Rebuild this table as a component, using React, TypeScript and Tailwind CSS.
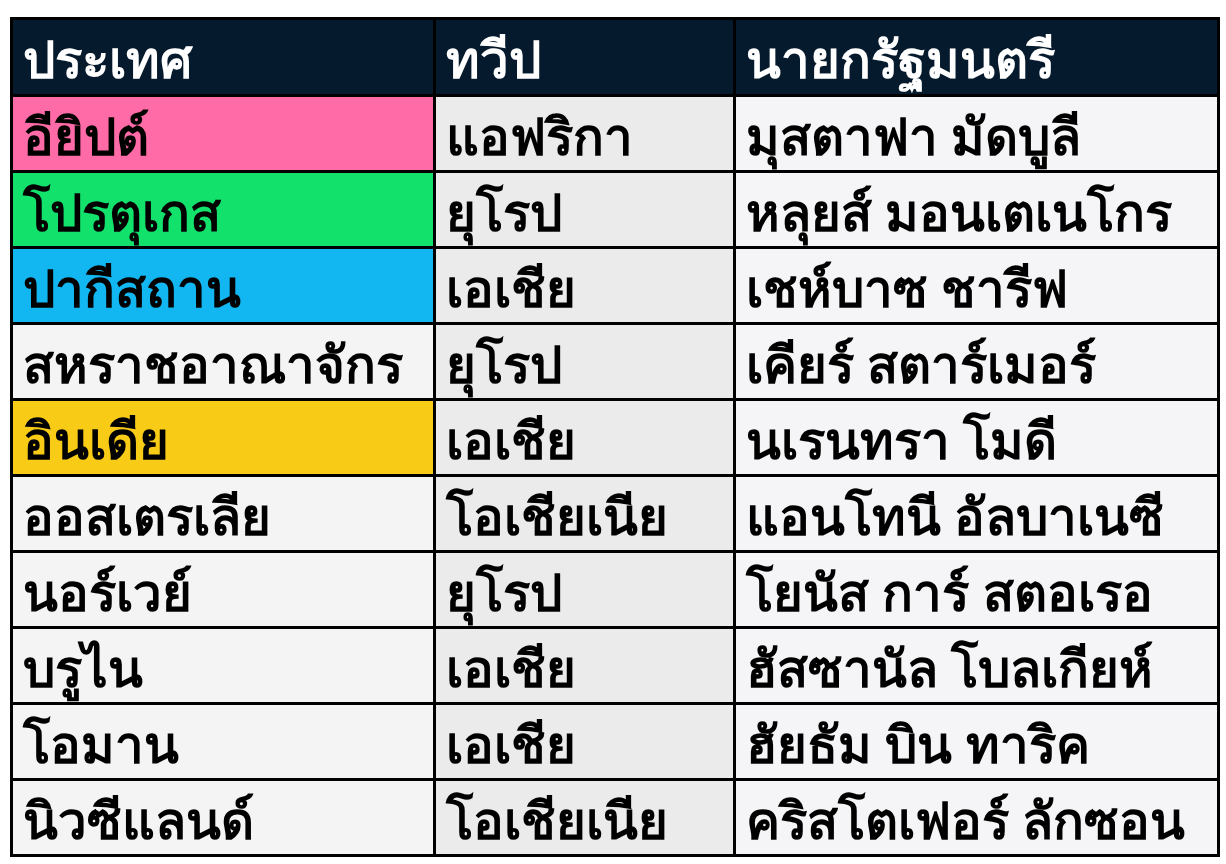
import React from 'react';

type Row = {
  country: string;
  continent: string;
  pm: string;
  color?: string;
};

const rows: Row[] = [
  { country: 'อียิปต์', continent: 'แอฟริกา', pm: 'มุสตาฟา มัดบูลี', color: 'bg-[#ff6ba6]' },
  { country: 'โปรตุเกส', continent: 'ยุโรป', pm: 'หลุยส์ มอนเตเนโกร', color: 'bg-[#12e26c]' },
  { country: 'ปากีสถาน', continent: 'เอเชีย', pm: 'เชห์บาซ ชารีฟ', color: 'bg-[#12b6f0]' },
  { country: 'สหราชอาณาจักร', continent: 'ยุโรป', pm: 'เคียร์ สตาร์เมอร์' },
  { country: 'อินเดีย', continent: 'เอเชีย', pm: 'นเรนทรา โมดี', color: 'bg-[#f8cb16]' },
  { country: 'ออสเตรเลีย', continent: 'โอเชียเนีย', pm: 'แอนโทนี อัลบาเนซี' },
  { country: 'นอร์เวย์', continent: 'ยุโรป', pm: 'โยนัส การ์ สตอเรอ' },
  { country: 'บรูไน', continent: 'เอเชีย', pm: 'ฮัสซานัล โบลเกียห์' },
  { country: 'โอมาน', continent: 'เอเชีย', pm: 'ฮัยธัม บิน ทาริค' },
  { country: 'นิวซีแลนด์', continent: 'โอเชียเนีย', pm: 'คริสโตเฟอร์ ลักซอน' },
];

export default function App() {
  return (
    <div className="w-[1226px] h-[864px] bg-white pt-[17px] pl-[10px] font-['Noto_Sans',sans-serif]">
      <table className="border-collapse border-[3px] border-black text-[51px] font-bold leading-none">
        <thead>
          <tr className="h-[77px] bg-[#061a2d] text-white">
            <th className="w-[423px] border-[3px] border-black px-[10px] pt-[3px] text-left font-bold">ประเทศ</th>
            <th className="w-[300px] border-[3px] border-black px-[10px] pt-[3px] text-left font-bold">ทวีป</th>
            <th className="w-[484px] border-[3px] border-black px-[10px] pt-[3px] text-left font-bold">นายกรัฐมนตรี</th>
          </tr>
        </thead>
        <tbody className="text-black">
          {rows.map((r) => (
            <tr key={r.country} className="h-[76px]">
              <td className={`border-[3px] border-black px-[10px] pt-[3px] ${r.color ?? 'bg-[#f4f4f5]'}`}>{r.country}</td>
              <td className="border-[3px] border-black bg-[#ebebeb] px-[10px] pt-[3px]">{r.continent}</td>
              <td className="border-[3px] border-black bg-[#f5f5f7] px-[10px] pt-[3px]">{r.pm}</td>
            </tr>
          ))}
        </tbody>
      </table>
    </div>
  );
}
